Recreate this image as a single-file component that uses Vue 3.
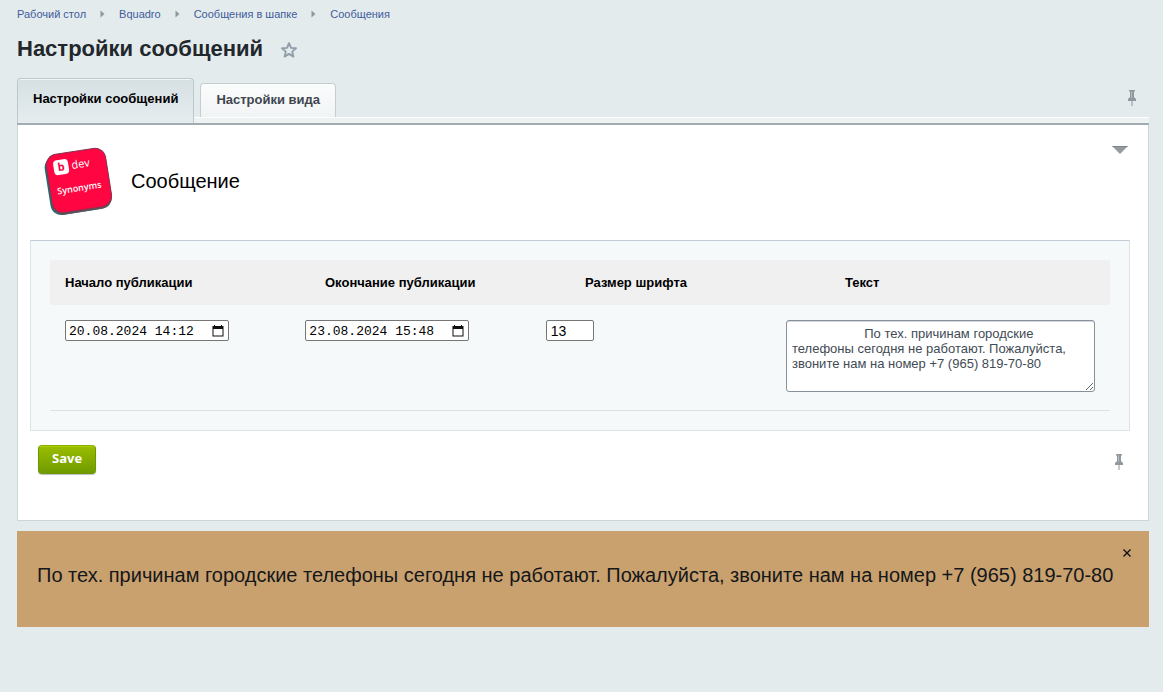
<script setup>
import { ref } from 'vue'

const crumbs = ['Рабочий стол', 'Bquadro', 'Сообщения в шапке', 'Сообщения']
const tabs = ['Настройки сообщений', 'Настройки вида']
const columns = ['Начало публикации', 'Окончание публикации', 'Размер шрифта', 'Текст']
const active = ref(0)
const start = ref('20.08.2024 14:12')
const end = ref('23.08.2024 15:48')
const size = ref('13')
const notice = 'По тех. причинам городские телефоны сегодня не работают. Пожалуйста, звоните нам на номер +7 (965) 819-70-80'
const message = ref(' '.repeat(20) + notice)
</script>

<template>
  <main class="page">
    <nav class="crumbs" aria-label="Навигация">
      <template v-for="(crumb, i) in crumbs" :key="crumb">
        <svg v-if="i" class="crumb-arrow" width="5" height="8" viewBox="0 0 5 8" aria-hidden="true"><path d="M0.5 0.5 4.5 4 0.5 7.5Z" /></svg>
        <a href="#">{{ crumb }}</a>
      </template>
    </nav>

    <header class="heading">
      <h1>Настройки сообщений</h1>
      <button class="icon-btn star" type="button" aria-label="Добавить в избранное">
        <svg width="18" height="18" viewBox="0 0 18 18"><path d="M9 2.2 11 6.9 16 7.3 12.2 10.6 13.4 15.6 9 12.9 4.6 15.6 5.8 10.6 2 7.3 7 6.9Z" fill="none" stroke="#929daa" stroke-width="1.9" stroke-linejoin="round" /></svg>
      </button>
    </header>

    <div class="tabbar">
      <div class="tabs" role="tablist">
        <button
          v-for="(tab, i) in tabs"
          :key="tab"
          type="button"
          role="tab"
          class="tab"
          :class="{ active: active === i }"
          :aria-selected="active === i"
          @click="active = i"
        >{{ tab }}</button>
      </div>
      <button class="icon-btn pin-top" type="button" aria-label="Закрепить вкладки">
        <svg width="10" height="17" viewBox="0 0 10 17"><path d="M2 1H8V2.5H7V8L9 10V12H1V10L3 8V2.5H2Z" fill="#90999d" /><path d="M4 2.5H5V9H4Z" fill="#b2babd" /><path d="M4.5 12H5.5V17H4.5Z" fill="#8d969a" /></svg>
      </button>
    </div>

    <form class="panel" @submit.prevent>
      <div class="panel-head">
        <svg class="logo" width="72" height="70" viewBox="0 0 72 70" role="img" aria-label="dev Synonyms">
          <g transform="rotate(-9 36 35)">
            <rect x="4" y="7" width="59" height="59" rx="11" fill="#276a72" />
            <rect x="6" y="7" width="60" height="59" rx="11" fill="#59565d" />
            <rect x="6" y="5" width="60" height="59" rx="11" fill="#ff0541" stroke="#85364e" stroke-width="1" />
            <rect x="13" y="11" width="15" height="15" rx="4" fill="#fff" />
            <text x="17" y="22" class="logo-b">b</text>
            <text x="31" y="22" class="logo-dev">dev</text>
            <text x="13" y="45" class="logo-name">Synonyms</text>
          </g>
        </svg>
        <h2>Сообщение</h2>
        <button class="icon-btn collapse" type="button" aria-label="Свернуть">
          <svg width="16" height="8" viewBox="0 0 16 8"><path d="M0 0H16L8 8Z" fill="#949ca0" /><path d="M0 0H16L15 1H1Z" fill="#7c868a" /></svg>
        </button>
      </div>

      <div class="content">
        <table>
          <thead>
            <tr><th v-for="column in columns" :key="column" scope="col">{{ column }}</th></tr>
          </thead>
          <tbody>
            <tr>
              <td>
                <span class="field date">
                  <input v-model="start" type="text" aria-label="Начало публикации">
                  <button type="button" class="icon-btn" aria-label="Выбрать дату начала">
                    <svg width="12" height="12" viewBox="0 0 12 12"><path d="M2 0H3V1H9V0H10V1H11.5V11.5H0.5V1H2ZM1.5 4V10.5H10.5V4Z" fill="#111" fill-rule="evenodd" /></svg>
                  </button>
                </span>
              </td>
              <td>
                <span class="field date">
                  <input v-model="end" type="text" aria-label="Окончание публикации">
                  <button type="button" class="icon-btn" aria-label="Выбрать дату окончания">
                    <svg width="12" height="12" viewBox="0 0 12 12"><path d="M2 0H3V1H9V0H10V1H11.5V11.5H0.5V1H2ZM1.5 4V10.5H10.5V4Z" fill="#111" fill-rule="evenodd" /></svg>
                  </button>
                </span>
              </td>
              <td><input v-model="size" class="field size" type="text" inputmode="numeric" aria-label="Размер шрифта"></td>
              <td><textarea v-model="message" aria-label="Текст" spellcheck="false"></textarea></td>
            </tr>
          </tbody>
        </table>
      </div>

      <footer class="actions">
        <button class="save" type="submit">Save</button>
        <button class="icon-btn" type="button" aria-label="Закрепить панель">
          <svg width="10" height="17" viewBox="0 0 10 17"><path d="M2 1H8V2.5H7V8L9 10V12H1V10L3 8V2.5H2Z" fill="#90999d" /><path d="M4 2.5H5V9H4Z" fill="#b2babd" /><path d="M4.5 12H5.5V17H4.5Z" fill="#8d969a" /></svg>
        </button>
      </footer>
    </form>

    <aside class="notice">
      <p>{{ notice }}</p>
      <button class="icon-btn close" type="button" aria-label="Закрыть">
        <svg width="8" height="8" viewBox="0 0 8 8"><path d="M0.5 0.5 7.5 7.5M7.5 0.5 0.5 7.5" stroke="#111" stroke-width="1.4" /></svg>
      </button>
    </aside>
  </main>
</template>

<style>
body {
  background: #e3ebed;
}
</style>

<style scoped>
.page {
  padding: 6px 14px 0 17px;
  font-family: "Liberation Sans", Arial, sans-serif;
  font-size: 13px;
  color: #000;
}
.page * {
  box-sizing: border-box;
}
.icon-btn {
  display: flex;
  padding: 0;
  border: 0;
  background: none;
  cursor: pointer;
}
.crumbs {
  display: flex;
  align-items: center;
  gap: 14px;
  height: 16px;
  font-size: 11px;
}
.crumbs a {
  color: #3f5b9c;
  text-decoration: none;
}
.crumb-arrow {
  fill: #8f989d;
}
.heading {
  display: flex;
  align-items: center;
  gap: 17px;
  height: 56px;
  padding-bottom: 2px;
}
h1 {
  margin: 0;
  font-size: 22px;
  line-height: 28px;
  color: #22272c;
}
.star {
  padding-top: 2px;
}
.tabbar {
  display: flex;
  justify-content: space-between;
  height: 47px;
  border-bottom: 2px solid #a3adb1;
  background: linear-gradient(#0000 39px, #fff 39px, #fff 40px, #edf2f3 40px);
}
.tabs {
  display: flex;
  align-items: flex-start;
  gap: 6px;
}
.tab {
  height: 34px;
  margin-top: 5px;
  padding: 0 15px 1px;
  border: 1px solid #c3ced1;
  border-bottom: 0;
  border-radius: 4px 4px 0 0;
  background: linear-gradient(#fbfcfc, #f1f4f5);
  font: bold 13px/16px "Liberation Sans", Arial, sans-serif;
  color: #3f4650;
  cursor: pointer;
}
.tab.active {
  height: 45px;
  margin-top: 0;
  padding: 0 15px 4px;
  border-color: #bcc8cc;
  background: linear-gradient(#d6dfe2, #e5edef);
  box-shadow: inset 0 1px #f3f6f7;
  color: #000;
}
.pin-top {
  align-self: flex-start;
  margin: 11px 12px 0 0;
}
.panel {
  padding: 0 18px 0 12px;
  border: 1px solid #ccd6d9;
  border-top: 0;
  background: #fff;
}
.panel-head {
  display: flex;
  align-items: center;
  gap: 16px;
  height: 115px;
  padding: 0 2px 4px 13px;
}
h2 {
  flex: 1;
  margin: 0;
  font-size: 20px;
  line-height: 24px;
  font-weight: normal;
}
.logo text {
  fill: #fff;
  font-family: "Open Sans", sans-serif;
}
.logo .logo-b {
  fill: #f00a40;
  font-size: 11px;
  font-weight: bold;
}
.logo-dev {
  font-size: 11px;
}
.logo-name {
  font-size: 9px;
  font-weight: 600;
}
.collapse {
  align-self: flex-start;
  margin-top: 21px;
}
.content {
  padding: 19px;
  border: 1px solid #dce4e8;
  border-top-color: #c2ccd4;
  background: #f5f9fa;
}
table,
thead,
tbody {
  display: block;
}
tr {
  display: grid;
  padding: 0 15px;
}
th,
td {
  padding: 0;
  text-align: left;
}
thead tr {
  grid-template-columns: 26fr 26fr 26fr 25fr;
  height: 45px;
  align-items: center;
  background: #f0f0f0;
}
tbody tr {
  grid-template-columns: 7fr 7fr 7fr 9fr;
  padding-top: 15px;
  padding-bottom: 18px;
  border-bottom: 1px solid #dce2e4;
}
.field {
  display: flex;
  height: 21px;
  border: 1px solid #767676;
  border-radius: 2px;
  background: #fff;
}
.date {
  width: 164px;
  align-items: center;
  padding-right: 4px;
}
.date input {
  flex: 1;
  min-width: 0;
  padding: 1px 0 0 3px;
  border: 0;
  background: none;
  font: 13px/19px "Liberation Mono", monospace;
  color: #000;
}
.size {
  width: 48px;
  padding: 0 4px;
  font: 14px/19px "Liberation Sans", Arial, sans-serif;
}
textarea {
  display: block;
  width: 100%;
  height: 72px;
  padding: 5px;
  border: 1px solid #87919c;
  border-radius: 3px;
  background: #fff;
  box-shadow: inset 0 1px #d3d8dd;
  font: 13px/15px "Liberation Sans", Arial, sans-serif;
  color: #3f4b54;
  resize: both;
}
.actions {
  display: flex;
  align-items: flex-start;
  justify-content: space-between;
  height: 89px;
  padding: 14px 6px 0 8px;
}
.actions .icon-btn {
  margin-top: 8px;
}
.save {
  height: 29px;
  padding: 0 13px 3px;
  border: 1px solid #6d9600;
  border-top-color: #8bad00;
  border-radius: 4px;
  background: linear-gradient(#9abd00, #709b00);
  box-shadow: inset 0 1px #acd000, 0 1px 1px #00000040;
  font: bold 13px/16px "Open Sans", sans-serif;
  color: #fff;
  cursor: pointer;
}
.notice {
  position: relative;
  margin-top: 10px;
  padding: 32px 20px 40px;
  background: #c9a16f;
}
.notice p {
  margin: 0;
  font-size: 20px;
  line-height: 24px;
  color: #151719;
}
.close {
  position: absolute;
  top: 18px;
  right: 18px;
}
</style>
